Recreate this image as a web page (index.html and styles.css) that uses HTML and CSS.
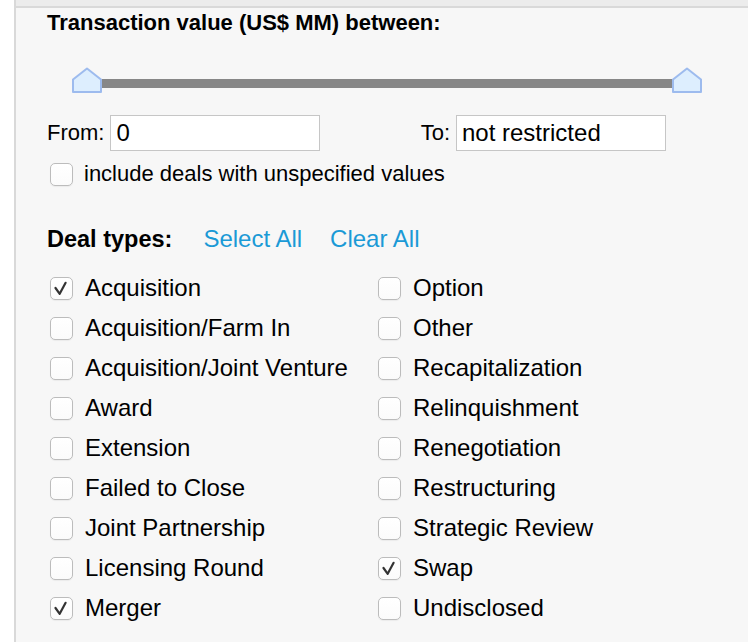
FILE: index.html
```html
<!DOCTYPE html>
<html>
<head>
<meta charset="utf-8">
<link rel="stylesheet" href="styles.css">
</head>
<body>
<div class="panel">
  <div class="topbar"></div>
  <div class="content">
    <h2 class="title">Transaction value (US$ MM) between:</h2>

    <div class="slider">
      <svg class="handle" width="30" height="26" viewBox="0 0 30 26"><polygon points="15,1.5 29,12.5 29,25 1,25 1,12.5" /></svg>
      <div class="track"></div>
      <svg class="handle" width="30" height="26" viewBox="0 0 30 26"><polygon points="15,1.5 29,12.5 29,25 1,25 1,12.5" /></svg>
    </div>

    <div class="range-row">
      <label class="field"><span class="field-label">From:</span><input class="text-input" type="text" value="0"></label>
      <label class="field"><span class="field-label">To:</span><input class="text-input" type="text" value="not restricted"></label>
    </div>

    <label class="option option-small">
      <span class="cb"></span>
      <span>include deals with unspecified values</span>
    </label>

    <div class="deal-head">
      <span class="deal-title">Deal types:</span>
      <a class="link link-select">Select All</a>
      <a class="link link-clear">Clear All</a>
    </div>

    <div class="deal-grid">
      <label class="option"><span class="cb checked"><svg width="23" height="23" viewBox="0 0 23 23"><path d="M5.5 11 L9.7 16.8 L15.6 5.8"/></svg></span><span>Acquisition</span></label>
      <label class="option"><span class="cb"></span><span>Acquisition/Farm In</span></label>
      <label class="option"><span class="cb"></span><span>Acquisition/Joint Venture</span></label>
      <label class="option"><span class="cb"></span><span>Award</span></label>
      <label class="option"><span class="cb"></span><span>Extension</span></label>
      <label class="option"><span class="cb"></span><span>Failed to Close</span></label>
      <label class="option"><span class="cb"></span><span>Joint Partnership</span></label>
      <label class="option"><span class="cb"></span><span>Licensing Round</span></label>
      <label class="option"><span class="cb checked"><svg width="23" height="23" viewBox="0 0 23 23"><path d="M5.5 11 L9.7 16.8 L15.6 5.8"/></svg></span><span>Merger</span></label>
      <label class="option"><span class="cb"></span><span>Option</span></label>
      <label class="option"><span class="cb"></span><span>Other</span></label>
      <label class="option"><span class="cb"></span><span>Recapitalization</span></label>
      <label class="option"><span class="cb"></span><span>Relinquishment</span></label>
      <label class="option"><span class="cb"></span><span>Renegotiation</span></label>
      <label class="option"><span class="cb"></span><span>Restructuring</span></label>
      <label class="option"><span class="cb"></span><span>Strategic Review</span></label>
      <label class="option"><span class="cb checked"><svg width="23" height="23" viewBox="0 0 23 23"><path d="M5.5 11 L9.7 16.8 L15.6 5.8"/></svg></span><span>Swap</span></label>
      <label class="option"><span class="cb"></span><span>Undisclosed</span></label>
    </div>
  </div>
</div>
</body>
</html>
```

FILE: styles.css
```css
html, body {
  margin: 0;
  padding: 0;
  background: #ffffff;
  font-family: "Liberation Sans", Arial, Helvetica, sans-serif;
  color: #000;
}

.panel {
  margin-left: 14px;
  border-left: 2px solid #d9d9d9;
  background: #f7f7f7;
  height: 642px;
  box-sizing: border-box;
  overflow: hidden;
}

.topbar {
  height: 6px;
  background: #ececec;
  border-bottom: 2px solid #d9d9d9;
}

.content {
  padding: 2px 0 0 31px;
}

.title {
  margin: 0;
  font-size: 22px;
  line-height: 26px;
  font-weight: bold;
}

.slider {
  display: flex;
  align-items: flex-start;
  width: 630px;
  height: 26px;
  margin: 31px 0 0 25px;
}

.handle {
  flex: none;
  display: block;
}

.handle polygon {
  fill: #ddeefe;
  stroke: #9dbbee;
  stroke-width: 2;
  stroke-linejoin: round;
}

.track {
  flex: 1;
  height: 9px;
  margin-top: 12px;
  background: #878787;
}

.range-row {
  display: flex;
  justify-content: space-between;
  width: 619px;
  margin-top: 22px;
}

.field {
  display: flex;
  align-items: center;
  gap: 6px;
}

.field-label {
  font-size: 22px;
}

.text-input {
  width: 210px;
  height: 36px;
  box-sizing: border-box;
  border: 1px solid #c6c6c6;
  background: #fff;
  padding: 0 5px;
  margin: 0;
  font-family: "Liberation Sans", Arial, Helvetica, sans-serif;
  font-size: 24px;
  color: #000;
  outline: none;
}

.option {
  display: flex;
  align-items: center;
  gap: 12px;
  font-size: 24px;
  line-height: 40px;
}

.option-small {
  font-size: 22px;
  line-height: 24px;
  gap: 11px;
  margin: 11px 0 0 3px;
}

.cb {
  flex: none;
  width: 23px;
  height: 23px;
  box-sizing: border-box;
  border: 1px solid #bcbcbc;
  border-radius: 5px;
  background: linear-gradient(#ffffff, #fbfbfb);
  box-shadow: 0 1px 1px rgba(0, 0, 0, 0.05);
}

.cb svg {
  display: block;
  margin: -1px;
}

.cb path {
  fill: none;
  stroke: #333333;
  stroke-width: 2.2;
  stroke-linecap: round;
  stroke-linejoin: round;
}

.deal-head {
  display: flex;
  align-items: baseline;
  margin-top: 33px;
  line-height: 40px;
}

.deal-title {
  font-size: 23.5px;
  font-weight: bold;
}

.link {
  font-size: 24px;
  color: #1b9ad6;
  cursor: pointer;
}

.link-select {
  margin-left: 31px;
}

.link-clear {
  margin-left: 28px;
}

.deal-grid {
  display: grid;
  grid-auto-flow: column;
  grid-template-rows: repeat(9, 40px);
  grid-template-columns: 328px 328px;
  margin: 9px 0 0 3px;
}
```
